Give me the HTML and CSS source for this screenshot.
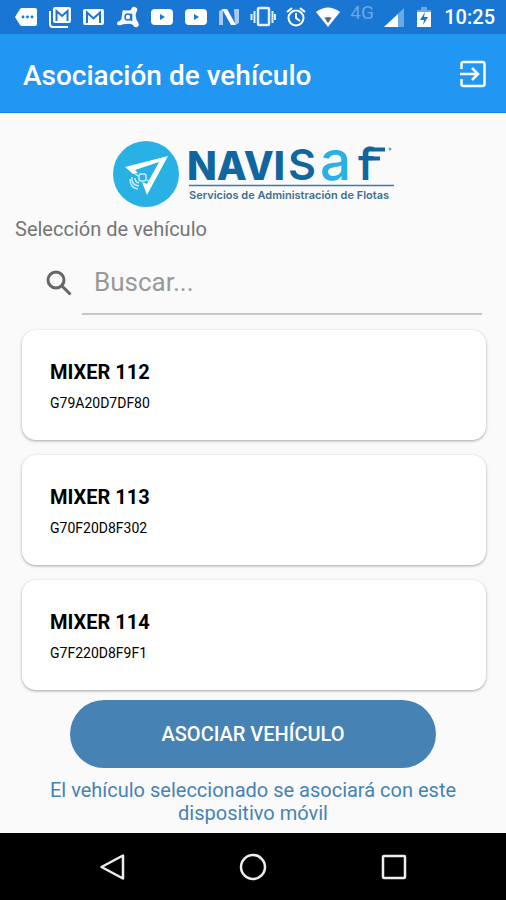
FILE: index.html
```html
<!DOCTYPE html>
<html lang="es">
<head>
<meta charset="utf-8">
<meta name="viewport" content="width=device-width, initial-scale=1">
<title>Asociación de vehículo</title>
<link rel="stylesheet" href="styles.css">
</head>
<body>
<div class="status">
  <div class="status-left">
    <svg class="ico" viewBox="0 0 22 22" fill="#fff"><path d="M7 2h13q2 0 2 2v14q0 2-2 2H7q-1 0-2-1L0 11l5-8q1-1 2-1z"/><g fill="#1976d2"><circle cx="8" cy="11" r="1.400"/><circle cx="12.500" cy="11" r="1.400"/><circle cx="17" cy="11" r="1.400"/></g></svg>
    <svg class="ico" viewBox="0 0 22 22"><path d="M1 5v13q0 3 3 3h15" fill="none" stroke="#fff" stroke-width="2"/><rect x="4" y="1" width="18" height="16" rx="2" fill="#fff"/><path d="M7.500 15V5l5.500 5 5.500-5v10" fill="none" stroke="#1976d2" stroke-width="2"/></svg>
    <svg class="ico" viewBox="0 0 22 22"><rect x="0" y="3" width="21" height="16" rx="2" fill="#fff"/><path d="M4 17V6.500l6.500 6 6.500-6V17" fill="none" stroke="#1976d2" stroke-width="2"/></svg>
    <svg class="ico" viewBox="0 0 22 22"><path d="M6 4q4 1 8 0 1-4 4-3 3 1 2 4-2 3-1 6 0 3 2 5 2 4-1 5-3 1-4-2-3-2-7-1-3 0-5 1-3 1-4-1 0-3 3-3 2-2 2-6 0-3 1-5z" fill="#fff"/><circle cx="11" cy="11" r="3" fill="none" stroke="#1976d2" stroke-width="1.600"/><path d="M14.500 7.500V15" stroke="#1976d2" stroke-width="1.600"/></svg>
    <svg class="ico" viewBox="0 0 22 22"><rect x="0" y="3" width="22" height="16" rx="4" fill="#fff"/><path d="M9 8v6l5-3z" fill="#1976d2"/></svg>
    <svg class="ico" viewBox="0 0 22 22"><rect x="0" y="3" width="22" height="16" rx="4" fill="#fff"/><path d="M9 8v6l5-3z" fill="#1976d2"/></svg>
    <svg class="ico" viewBox="0 0 22 22"><path d="M0 19V5l4-2v16zM15 3h5v14l-4 2z" fill="#a9c9ee"/><path d="M3 3h5l9 16h-5z" fill="#fff"/></svg>
  </div>
  <div class="status-right">
    <svg class="ico ico-vibrate" viewBox="0 0 26 22" fill="none" stroke="#e0f0ff" stroke-width="2"><rect x="8" y="2" width="11" height="17" rx="1" stroke-width="2.500"/><path d="M4.500 5v12M22.500 5v12M1.500 8v6M25 8v6"/></svg>
    <svg class="ico ico-narrow" viewBox="0 0 20 22" fill="none" stroke="#fff" stroke-width="2"><circle cx="10" cy="12" r="7.500"/><path d="M10 7v5l4 3M1 6l5-4M19 6l-5-4"/></svg>
    <svg class="ico ico-wide" viewBox="0 0 24 22"><path d="M0 6Q12-3 24 6L12 21z" fill="#fff"/><path d="M8.500 12q3.500-2 7 0L12 17z" fill="#5b6b7c"/></svg>
    <span class="network">4G</span>
    <svg class="ico ico-narrow" viewBox="0 0 20 22"><path d="M20 2v19H0z" fill="#6ba8e6"/><path d="M14 8v13H0z" fill="#fff"/></svg>
    <svg class="ico ico-narrow" viewBox="0 0 20 22"><path d="M7 1h6v3h4v3H3V4h4z" fill="#6ba8e6"/><path d="M3 6h14v15H3z" fill="#fff"/><path d="M11 6l-5 8h4l-1 5 5-8h-4z" fill="#1976d2"/></svg>
    <time class="clock">10:25</time>
  </div>
</div>

<header class="appbar">
  <h1 class="appbar-title">Asociación de vehículo</h1>
  <button class="exit" type="button" aria-label="Salir">
    <svg viewBox="0 0 28 28" width="28" height="28" fill="none" stroke="#fff" stroke-width="2.500"><path d="M2.500 9V4q0-2 2-2h19q2 0 2 2v20q0 2-2 2h-19q-2 0-2-2v-5M1 14h17M13 8l6 6-6 6"/></svg>
  </button>
</header>

<main class="content">
  <svg class="logo" viewBox="0 0 282 68" role="img" aria-label="NAVISAF Servicios de Administración de Flotas">
    <circle cx="34" cy="33" r="33" fill="#29b0e4"/>
    <path d="M13 26L56 15 35 54 30 41l5 2 12-22-24 8 3 3-5 1z" fill="#fff"/>
    <g fill="none" stroke="#c9edfa" stroke-width="1.500"><rect x="27" y="33" width="7" height="7" rx="2" fill="#29b0e4"/><path d="M23 33l3 2M35 39l4 3M20 36q-1 8 7 9M23 37q0 4 4 5M18 38q0 9 8 10"/></g>
    <text class="logo-navi" x="75" y="39">NAVI</text>
    <text class="logo-s" x="176" y="39">S</text>
    <text class="logo-a" x="208" y="39">a</text>
    <path d="M258 8.500h15M256 17.500h12" stroke="#12669f" stroke-width="4"/>
    <text class="logo-f" x="246" y="39">f</text>
    <circle cx="278" cy="8" r="1.500" fill="#7d9fb8"/>
    <path d="M77 44.500H282" stroke="#3d7ba8" stroke-width="1.500"/>
    <text class="logo-tag" x="77" y="58">Servicios de Administración de Flotas</text>
  </svg>

  <label class="label" for="search">Selección de vehículo</label>
  <div class="search">
    <svg class="search-icon" viewBox="0 0 26 26" fill="none" stroke="#666" stroke-width="3"><circle cx="10" cy="10" r="8"/><path d="M15.500 15.500l9 9"/></svg>
    <input class="search-input" id="search" type="text" placeholder="Buscar...">
  </div>

  <ul class="list">
    <li><button class="card" type="button"><span class="card-name">MIXER 112</span><span class="card-code">G79A20D7DF80</span></button></li>
    <li><button class="card" type="button"><span class="card-name">MIXER 113</span><span class="card-code">G70F20D8F302</span></button></li>
    <li><button class="card" type="button"><span class="card-name">MIXER 114</span><span class="card-code">G7F220D8F9F1</span></button></li>
  </ul>

  <button class="submit" type="button">ASOCIAR VEHÍCULO</button>
  <p class="hint">El vehículo seleccionado se asociará con este dispositivo móvil</p>
</main>

<nav class="navbar" aria-label="Sistema">
  <button type="button" aria-label="Atrás"><svg viewBox="0 0 28 28" width="28" height="28" fill="none" stroke="#eee" stroke-width="2.500"><path d="M25 2.500v23L3.500 14z" stroke-linejoin="round"/></svg></button>
  <button type="button" aria-label="Inicio"><svg viewBox="0 0 28 28" width="28" height="28" fill="none" stroke="#eee" stroke-width="2.500"><circle cx="14" cy="14" r="12"/></svg></button>
  <button type="button" aria-label="Recientes"><svg viewBox="0 0 28 28" width="28" height="28" fill="none" stroke="#eee" stroke-width="2.500"><rect x="3" y="3" width="22" height="22" rx="1"/></svg></button>
</nav>
</body>
</html>
```
FILE: styles.css
```css
* { box-sizing: border-box; }

body {
  margin: 0;
  min-height: 100vh;
  display: flex;
  flex-direction: column;
  background: #fafafa;
  font-family: Roboto, "Liberation Sans", sans-serif;
}

button {
  border: 0;
  padding: 0;
  background: none;
  font-family: inherit;
  cursor: pointer;
}

svg { display: block; }

.status {
  height: 34px;
  padding: 0 11px 0 15px;
  display: flex;
  justify-content: space-between;
  align-items: center;
  background: #1976d2;
  color: #fff;
}

.status-left, .status-right { display: flex; align-items: center; }
.status-left { gap: 12px; }
.status-right { gap: 10px; }
.ico { width: 22px; height: 22px; flex: none; }
.ico-vibrate { width: 26px; }
.ico-narrow { width: 20px; }
.ico-wide { width: 24px; }

.network {
  width: 24px;
  padding-bottom: 8px;
  font-size: 19px;
  line-height: 18px;
  color: #6ba8e6;
}

.clock { font-size: 20px; line-height: 24px; font-weight: 500; }

.appbar {
  height: 79px;
  padding: 2px 19px 0 23px;
  display: flex;
  justify-content: space-between;
  align-items: center;
  background: #2196f3;
  border-bottom: 1px solid #1c84d8;
  color: #fff;
}

.appbar-title { margin: 0; padding-top: 3px; font-size: 28px; line-height: 36px; font-weight: 500; }

.content {
  flex: 1;
  padding: 28px 20px 8px;
  display: flex;
  flex-direction: column;
}

.logo { width: 282px; height: 68px; align-self: center; overflow: visible; }
.logo text { font-family: Inter, "Liberation Sans", sans-serif; }
.logo-navi { font-size: 39px; font-weight: 800; fill: #12669f; }
.logo-s, .logo-f { font-size: 43px; font-weight: 600; fill: #12669f; }
.logo-a { font-size: 55px; font-weight: 500; fill: #29b0e4; }
.logo-tag { font-size: 11px; font-weight: 600; fill: #3d7090; }

.label {
  margin: 8px -5px 0;
  font-size: 20px;
  line-height: 24px;
  color: #757575;
}

.search {
  margin: 10px 4px 0 26px;
  display: flex;
  align-items: center;
  gap: 10px;
}

.search-icon { width: 26px; height: 26px; flex: none; }

.search-input {
  flex: 1;
  min-width: 0;
  height: 64px;
  padding: 0 12px;
  border: 0;
  border-bottom: 2px solid #c8c8c8;
  background: none;
  font: 26px Roboto, "Liberation Sans", sans-serif;
  color: #212121;
  outline: 0;
}
.search-input::placeholder { color: #999; opacity: 1; }

.list {
  list-style: none;
  margin: 15px 0 0 2px;
  padding: 0;
  display: flex;
  flex-direction: column;
  gap: 15px;
}

.card {
  width: 100%;
  height: 110px;
  padding: 3px 28px 0;
  display: flex;
  flex-direction: column;
  justify-content: center;
  gap: 9px;
  border-radius: 14px;
  background: #fff;
  box-shadow: 0 1px 3px rgba(0, 0, 0, .35);
  text-align: left;
  color: #000;
}
.card-name { font-size: 20px; line-height: 24px; font-weight: 700; }
.card-code { font-size: 14px; line-height: 20px; }

.submit {
  margin: 10px 50px 0;
  height: 68px;
  border-radius: 34px;
  background: #4682b4;
  color: #fff;
  font-size: 20px;
  font-weight: 500;
}

.hint {
  margin: 11px 20px 0;
  text-align: center;
  font-size: 20px;
  line-height: 23px;
  color: #4682b4;
}

.navbar {
  height: 67px;
  padding: 0 98px;
  display: flex;
  justify-content: space-between;
  align-items: center;
  background: #000;
}
```
